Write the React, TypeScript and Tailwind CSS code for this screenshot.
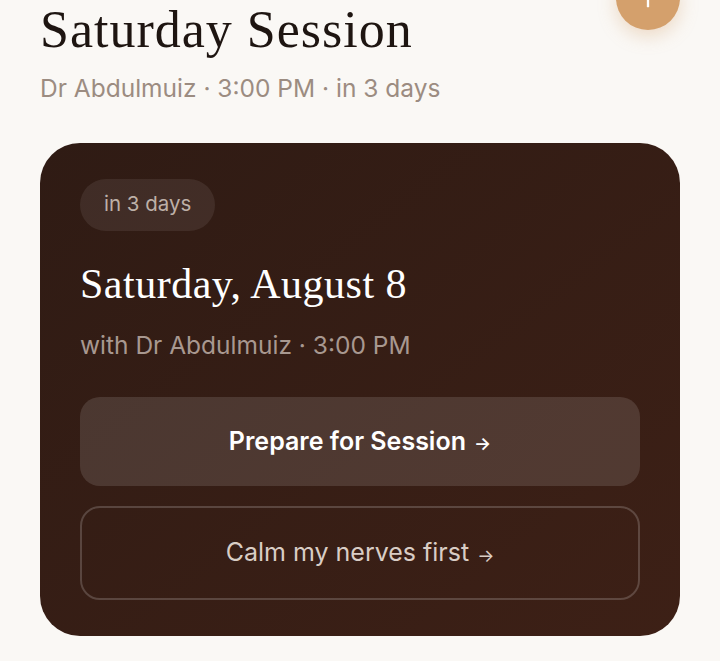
import { Plus } from 'lucide-react';

const serif = { fontFamily: '"Liberation Serif", "DejaVu Serif", serif' };

export default function App() {
  return (
    <div className="relative min-h-[661px] overflow-hidden bg-[#faf8f5] px-10 font-['Inter',sans-serif]">
      <button className="absolute -top-[34px] right-10 flex h-16 w-16 items-center justify-center rounded-full bg-[#d4a06c] text-white shadow-[0_6px_18px_rgba(212,160,108,0.35)]">
        <Plus className="h-7 w-7" strokeWidth={2} />
      </button>

      <div className="pt-[4px]">
        <h1 style={serif} className="text-[52px] leading-none text-[#1e1511] tracking-[1px]">
          Saturday Session
        </h1>
        <p className="mt-[20px] text-[24.5px] leading-none text-[#9c8c81]">
          Dr Abdulmuiz · 3:00 PM · in 3 days
        </p>
      </div>

      <div className="mt-[42px] rounded-[40px] bg-gradient-to-br from-[#2f1b14] to-[#3d2016] px-10 pt-9 pb-9">
        <span className="inline-flex h-[52px] items-center rounded-full bg-white/[0.08] px-6 text-[20.5px] text-[#bdb0a7]">
          in 3 days
        </span>
        <h2 style={serif} className="mt-[32px] text-[42px] leading-none text-white tracking-[0.5px]">
          Saturday, August 8
        </h2>
        <p className="mt-[28px] text-[24.5px] leading-none text-[#a89890]">
          with Dr Abdulmuiz · 3:00 PM
        </p>
        <div className="mt-[40px] flex flex-col gap-5">
          <button className="flex h-[89px] items-center justify-center rounded-[20px] bg-white/[0.12] text-[25px] font-semibold text-white">
            Prepare for Session <span className="ml-2 mt-1 text-[18px]">→</span>
          </button>
          <button className="flex h-[94px] items-center justify-center rounded-[20px] border-2 border-white/[0.18] text-[25px] text-[#d9cdc5]">
            Calm my nerves first <span className="ml-2 mt-1 text-[18px]">→</span>
          </button>
        </div>
      </div>
    </div>
  );
}
